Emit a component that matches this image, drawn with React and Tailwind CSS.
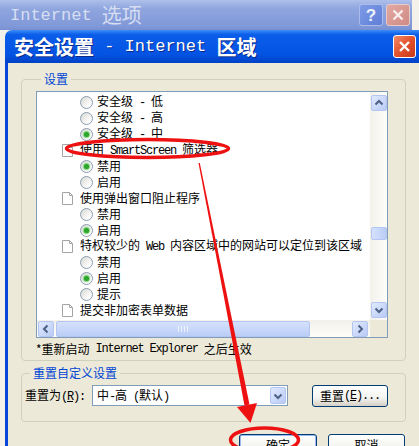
import React from 'react';

function M({ children, className = 'tracking-[-1.2px]' }) {
  return (
    <span className={`font-['Liberation_Mono',monospace] whitespace-pre ${className}`}>{children}</span>
  );
}

function Radio({ checked }) {
  return (
    <span className="w-[13px] h-[13px] shrink-0 rounded-full border border-[#8C9CB0] bg-[linear-gradient(135deg,#D6D6CF,#FFFFFF_75%)] flex items-center justify-center">
      {checked && <span className="w-[5px] h-[5px] rounded-full bg-[#2DA52D] shadow-[0_0_1px_1px_#7AD27A]" />}
    </span>
  );
}

function DocIcon() {
  return (
    <svg width="11" height="13" viewBox="0 0 11 13" className="shrink-0">
      <path d="M0.5 0.5H7.5L10.5 3.5V12.5H0.5Z" fill="#fff" stroke="#A4A4A4" />
      <path d="M7.5 0.5V3.5H10.5" fill="none" stroke="#A4A4A4" />
    </svg>
  );
}

const arrows = {
  up: 'M3.5 8.5L7 5L10.5 8.5',
  down: 'M3.5 5.5L7 9L10.5 5.5',
  left: 'M8.5 3.5L5 7L8.5 10.5',
  right: 'M5.5 3.5L9 7L5.5 10.5',
};

function SBtn({ dir }) {
  return (
    <div className="w-[16px] h-[16px] shrink-0 rounded-[2px] border border-[#B3C5F0] bg-[linear-gradient(135deg,#E0E9FE,#B9CBF6)] flex items-center justify-center">
      <svg width="14" height="14" viewBox="0 0 14 14">
        <path d={arrows[dir]} fill="none" stroke="#4D6185" strokeWidth="2" />
      </svg>
    </div>
  );
}

function Row({ kind, checked, children }) {
  if (kind === 'doc') {
    return (
      <div className="h-[16px] flex items-center pl-[25px] gap-[7px] whitespace-nowrap">
        <DocIcon />
        <span>{children}</span>
      </div>
    );
  }
  return (
    <div className="h-[16px] flex items-center pl-[43px] gap-[4px] whitespace-nowrap">
      <Radio checked={checked} />
      <span>{children}</span>
    </div>
  );
}

function XpButton({ children, wide = 'w-[76px]', isDefault }) {
  return (
    <div
      className={`${wide} h-[22px] shrink-0 rounded-[3px] border border-[#003C74] bg-[linear-gradient(180deg,#FFFFFF,#F3F3EF_60%,#D6D0C5)] flex items-center justify-center ${
        isDefault ? 'shadow-[inset_0_0_0_1px_#9DB8F0]' : ''
      }`}
    >
      {children}
    </div>
  );
}

export default function App() {
  return (
    <div className="relative w-[419px] h-[446px] overflow-hidden bg-[#F3F1EA] text-[12px] leading-none text-black font-['Noto_Sans_CJK_SC',sans-serif]">
      {/* inactive parent window title */}
      <div className="w-[412px] h-[30px] flex items-center pl-[10px] pr-[2px] bg-[linear-gradient(180deg,#AEBFEA,#8EA5DE_30%,#8299D9_85%,#7890D2)]">
        <span className="text-[20px] text-[#D6DDF2] flex items-center">
          <M className="text-[17px] tracking-[0px]">Internet </M>
          选项
        </span>
        <div className="ml-auto flex gap-[3px]">
          <div className="w-[24px] h-[22px] rounded-[3px] border border-[#A9BCEB] bg-[linear-gradient(135deg,#7F9BE6,#5F7FD6)] flex items-center justify-center text-[17px] font-bold text-[#EEF2FC] font-['Liberation_Sans',sans-serif]">
            ?
          </div>
          <div className="w-[24px] h-[22px] rounded-[3px] border border-[#E7CBCB] bg-[linear-gradient(135deg,#E2A9A2,#D08A85)] flex items-center justify-center">
            <svg width="14" height="14" viewBox="0 0 14 14">
              <path d="M2.5 2.5L11.5 11.5M11.5 2.5L2.5 11.5" stroke="#F8ECEC" strokeWidth="2.4" />
            </svg>
          </div>
        </div>
      </div>

      {/* active dialog */}
      <div className="ml-[5px] w-[416px] flex flex-col rounded-tl-[7px] overflow-hidden">
        <div className="h-[33px] flex items-center pl-[9px] pr-[5px] bg-[linear-gradient(180deg,#3D8EF7,#0A5DE9_14%,#0453E3_75%,#0041C4)]">
          <span className="text-[20px] font-bold text-white flex items-center [text-shadow:1px_1px_0_#0A2A8A]">
            安全设置
            <M className="text-[17px] tracking-[0px] font-normal"> - Internet </M>
            区域
          </span>
          <div className="ml-auto w-[23px] h-[23px] rounded-[3px] border border-white bg-[linear-gradient(135deg,#F08A6A,#E2522C_50%,#C8391A)] flex items-center justify-center">
            <svg width="15" height="15" viewBox="0 0 15 15">
              <path d="M3 3L12 12M12 3L3 12" stroke="#fff" strokeWidth="2.4" />
            </svg>
          </div>
        </div>

        <div className="h-[383px] border-l-[3px] border-[#0746D8] bg-[#ECE9D8] px-[13px] flex flex-col">
          {/* settings group */}
          <fieldset className="mt-[9px] w-[385px] border border-[#D0D0BF] rounded-[4px] pl-[14px] pr-[17px] pt-[5px] pb-[4px]">
            <legend className="ml-[5px] px-[3px] text-[#0046D5] leading-[14px]">设置</legend>
            <div className="w-[352px] h-[247px] border border-[#7F9DB9] bg-white flex flex-col">
              <div className="flex flex-1 min-h-0">
                <div className="flex-1 overflow-hidden pt-[2px]">
                  <Row>安全级<M> - </M>低</Row>
                  <Row>安全级<M> - </M>高</Row>
                  <Row checked>安全级<M> - </M>中</Row>
                  <Row kind="doc">使用<M> SmartScreen </M>筛选器</Row>
                  <Row checked>禁用</Row>
                  <Row>启用</Row>
                  <Row kind="doc">使用弹出窗口阻止程序</Row>
                  <Row>禁用</Row>
                  <Row checked>启用</Row>
                  <Row kind="doc">特权较少的<M> Web </M>内容区域中的网站可以定位到该区域</Row>
                  <Row>禁用</Row>
                  <Row checked>启用</Row>
                  <Row>提示</Row>
                  <Row kind="doc">提交非加密表单数据</Row>
                  <Row>禁用</Row>
                </div>
                <div className="w-[17px] bg-[linear-gradient(90deg,#F3F1EA,#FDFDFA)] flex flex-col items-center pt-[3px] pb-[2px]">
                  <SBtn dir="up" />
                  <div className="mt-[116px] w-[16px] h-[13px] rounded-[2px] border border-[#B3C5F0] bg-[linear-gradient(90deg,#D5E1FD,#BBCDF7)]" />
                  <div className="mt-auto">
                    <SBtn dir="down" />
                  </div>
                </div>
              </div>
              <div className="h-[17px] flex">
                <div className="flex-1 bg-[linear-gradient(180deg,#F3F1EA,#FDFDFA)] flex items-center pl-[1px] pr-[2px]">
                  <SBtn dir="left" />
                  <div className="ml-[2px] w-[254px] h-[16px] rounded-[2px] border border-[#B3C5F0] bg-[linear-gradient(180deg,#D5E1FD,#BBCDF7)] flex items-center justify-center gap-[2px]">
                    <span className="w-[1px] h-[6px] bg-[#EEF3FF]" />
                    <span className="w-[1px] h-[6px] bg-[#EEF3FF]" />
                    <span className="w-[1px] h-[6px] bg-[#EEF3FF]" />
                    <span className="w-[1px] h-[6px] bg-[#EEF3FF]" />
                  </div>
                  <div className="ml-auto">
                    <SBtn dir="right" />
                  </div>
                </div>
                <div className="w-[17px] bg-[#ECE9D8]" />
              </div>
            </div>
            <div className="mt-[4px] h-[14px] flex items-center">
              *重新启动<M> Internet Explorer </M>之后生效
            </div>
          </fieldset>

          {/* reset group */}
          <fieldset className="mt-[5px] w-[385px] border border-[#D0D0BF] rounded-[4px] pl-[3px] pr-[17px] pt-[5px] pb-[15px]">
            <legend className="ml-[5px] px-[3px] text-[#0046D5] leading-[14px]">重置自定义设置</legend>
            <div className="h-[21px] flex items-center">
              <span className="w-[67px] whitespace-nowrap">
                重置为<M>(<span className="underline">R</span>):</M>
              </span>
              <div className="w-[196px] h-[21px] border border-[#7F9DB9] bg-white flex items-center pl-[4px] pr-[1px]">
                <span>
                  中<M>-</M>高<M> (</M>默认<M>)</M>
                </span>
                <div className="ml-auto w-[16px] h-[17px] rounded-[2px] border border-[#B3C5F0] bg-[linear-gradient(135deg,#E0E9FE,#B9CBF6)] flex items-center justify-center">
                  <svg width="14" height="14" viewBox="0 0 14 14">
                    <path d={arrows.down} fill="none" stroke="#4D6185" strokeWidth="2" />
                  </svg>
                </div>
              </div>
              <div className="ml-auto">
                <XpButton>
                  重置<M>(<span className="underline">E</span>)...</M>
                </XpButton>
              </div>
            </div>
          </fieldset>

          <div className="mt-[12px] flex justify-end gap-[11px] pr-[3px]">
            <XpButton wide="w-[78px]" isDefault>确定</XpButton>
            <XpButton wide="w-[77px]">取消</XpButton>
          </div>
        </div>
      </div>

      {/* red annotations */}
      <svg className="absolute inset-0 pointer-events-none" width="419" height="446" viewBox="0 0 419 446">
        <ellipse cx="147.5" cy="148.5" rx="81" ry="9" fill="none" stroke="#EE1111" strokeWidth="3.5" />
        <polygon points="198.5,163 199.8,163 249.5,404.5 244.5,405.5" fill="#EE1111" />
        <polygon points="237,407 257,403 250.5,423" fill="#EE1111" />
        <ellipse cx="264.5" cy="440" rx="34" ry="12" fill="none" stroke="#EE1111" strokeWidth="3.5" />
      </svg>
    </div>
  );
}
